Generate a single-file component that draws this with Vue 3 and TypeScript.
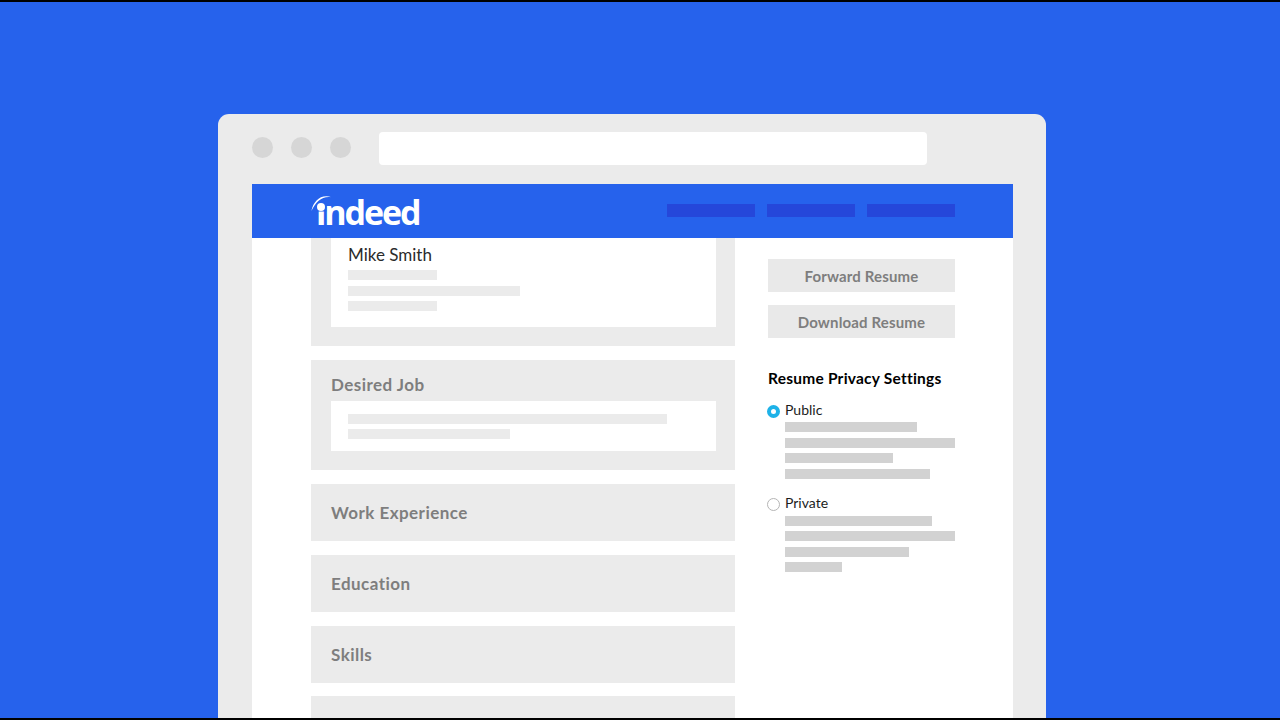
<script setup lang="ts">
const navItems: number[] = [1, 2, 3]
const nameBars: number[] = [89, 172, 89]
const jobBars: number[] = [319, 162]
const sections: string[] = ['Work Experience', 'Education', 'Skills', '']
const publicBars: number[] = [132, 170, 108, 145]
const privateBars: number[] = [147, 170, 124, 57]
</script>

<template>
  <div class="stage">
    <div class="browser">
      <div class="chrome">
        <div class="dots">
          <span class="dot"></span>
          <span class="dot"></span>
          <span class="dot"></span>
        </div>
        <div class="address"></div>
      </div>
      <div class="page">
        <header class="header">
          <div class="logo">
            <span class="logo-text">indeed</span>
            <svg class="arc" width="26" height="24" viewBox="0 0 26 24" aria-hidden="true">
              <rect x="4" y="3" width="11.5" height="14.5" fill="#2662ec" />
              <path d="M0.4 17C2.4 7 10 -0.2 20.5 3.2C11 1.8 5 7.5 0.4 17Z" fill="#fff" />
              <circle cx="10" cy="13" r="4" fill="#fff" />
            </svg>
          </div>
          <nav class="nav">
            <span v-for="n in navItems" :key="n" class="nav-bar"></span>
          </nav>
        </header>
        <main class="main">
          <div class="left">
            <section class="panel panel-name">
              <div class="inner inner-name">
                <div class="name">Mike Smith</div>
                <div class="bars-name">
                  <span v-for="(w, i) in nameBars" :key="i" class="bar" :style="{ width: w + 'px' }"></span>
                </div>
              </div>
            </section>
            <section class="panel panel-job">
              <h2 class="panel-title">Desired Job</h2>
              <div class="inner inner-job">
                <span v-for="(w, i) in jobBars" :key="i" class="bar" :style="{ width: w + 'px' }"></span>
              </div>
            </section>
            <section v-for="s in sections" :key="s" class="panel panel-row">
              <h2 v-if="s" class="panel-title">{{ s }}</h2>
            </section>
          </div>
          <aside class="right">
            <button class="action" type="button">Forward Resume</button>
            <button class="action" type="button">Download Resume</button>
            <h3 class="privacy-title">Resume Privacy Settings</h3>
            <div class="option option-public">
              <div class="option-label">
                <span class="radio radio-on"></span>
                <span>Public</span>
              </div>
              <div class="option-bars">
                <span v-for="(w, i) in publicBars" :key="i" class="bar bar-dark" :style="{ width: w + 'px' }"></span>
              </div>
            </div>
            <div class="option option-private">
              <div class="option-label">
                <span class="radio"></span>
                <span>Private</span>
              </div>
              <div class="option-bars">
                <span v-for="(w, i) in privateBars" :key="i" class="bar bar-dark" :style="{ width: w + 'px' }"></span>
              </div>
            </div>
          </aside>
        </main>
      </div>
    </div>
  </div>
</template>

<style>
html,
body {
  margin: 0;
  background: #000;
  overflow: hidden;
}
</style>

<style scoped>
.stage {
  box-sizing: border-box;
  width: 1280px;
  height: 716px;
  margin-top: 2px;
  padding: 112px 0 0 218px;
  background: #2662ec;
  overflow: hidden;
  font-family: Lato, "Noto Sans", sans-serif;
}
.browser {
  box-sizing: border-box;
  width: 828px;
  height: 604px;
  padding: 0 33px 0 34px;
  background: #ebebeb;
  border-radius: 11px 11px 0 0;
  overflow: hidden;
}
.chrome {
  display: flex;
  align-items: flex-start;
  height: 70px;
}
.dots {
  display: flex;
  gap: 18px;
  width: 127px;
  margin-top: 23px;
}
.dot {
  width: 21px;
  height: 21px;
  border-radius: 50%;
  background: #d6d6d6;
}
.address {
  width: 548px;
  height: 33px;
  margin-top: 18px;
  background: #fff;
  border-radius: 4px;
}
.page {
  height: 534px;
  background: #fff;
  overflow: hidden;
}
.header {
  display: flex;
  align-items: center;
  justify-content: space-between;
  box-sizing: border-box;
  height: 54px;
  padding: 0 58px 0 59px;
  background: #2662ec;
}
.logo {
  position: relative;
  height: 54px;
  display: flex;
  align-items: center;
}
.arc {
  position: absolute;
  left: 0;
  top: 10px;
}
.logo-text {
  margin-top: 2px;
  padding-left: 5px;
  color: #fff;
  font-family: "Open Sans", Lato, sans-serif;
  font-weight: 700;
  font-size: 34px;
  letter-spacing: -2.1px;
  line-height: 38px;
}
.nav {
  display: flex;
  gap: 12px;
  margin-bottom: 2px;
}
.nav-bar {
  width: 88px;
  height: 13px;
  background: #2547da;
}
.main {
  display: flex;
  gap: 33px;
  padding-left: 59px;
}
.left {
  display: flex;
  flex-direction: column;
  gap: 14px;
  width: 424px;
  flex: none;
}
.panel {
  box-sizing: border-box;
  background: #ebebeb;
  padding: 0 19px 0 20px;
}
.panel-name {
  height: 108px;
}
.inner {
  background: #fff;
  padding-left: 17px;
}
.inner-name {
  height: 89px;
  padding-top: 6px;
  box-sizing: border-box;
}
.name {
  color: #2b2b2b;
  font-size: 17px;
  line-height: 22px;
}
.bars-name {
  display: flex;
  flex-direction: column;
  gap: 5.5px;
  margin-top: 4px;
}
.bar {
  display: block;
  height: 10px;
  background: #ebebeb;
}
.bar-dark {
  background: #d2d2d2;
}
.panel-job {
  height: 110px;
  padding-top: 14px;
}
.panel-title {
  margin: 0 0 1px;
  color: #7e7e7e;
  font-size: 17px;
  font-weight: 700;
  letter-spacing: 0.45px;
  line-height: 21px;
}
.inner-job {
  display: flex;
  flex-direction: column;
  gap: 5px;
  box-sizing: border-box;
  height: 50px;
  margin-top: 6px;
  padding-top: 13px;
}
.panel-row {
  display: flex;
  align-items: center;
  height: 57px;
  flex: none;
}
.panel-row:last-child {
  margin-top: -1px;
}
.right {
  width: 187px;
  flex: none;
  padding-top: 21px;
}
.action {
  display: block;
  width: 187px;
  height: 33px;
  margin: 0 0 13px;
  padding: 0;
  border: 0;
  background: #e9e9e9;
  color: #7e7e7e;
  font-family: Lato, "Noto Sans", sans-serif;
  font-size: 15px;
  font-weight: 700;
  letter-spacing: 0.15px;
}
.privacy-title {
  margin: 30px 0 0;
  color: #000;
  font-size: 15.5px;
  font-weight: 700;
  letter-spacing: 0.23px;
  line-height: 20px;
}
.option-public {
  margin-top: 12px;
}
.option-private {
  margin-top: 15px;
}
.option-label {
  display: flex;
  align-items: center;
  gap: 5px;
  height: 18px;
  color: #1c1c1c;
  font-size: 14px;
}
.radio {
  box-sizing: border-box;
  width: 13px;
  height: 13px;
  margin: 3px 0 0 -1px;
  border: 1px solid #b5b5b5;
  border-radius: 50%;
  background: #fff;
  flex: none;
}
.radio-on {
  margin-top: 4px;
  border: 4.5px solid #1eb2e8;
}
.option-bars {
  display: flex;
  flex-direction: column;
  gap: 5.5px;
  margin-top: 4px;
  padding-left: 17px;
}
</style>
